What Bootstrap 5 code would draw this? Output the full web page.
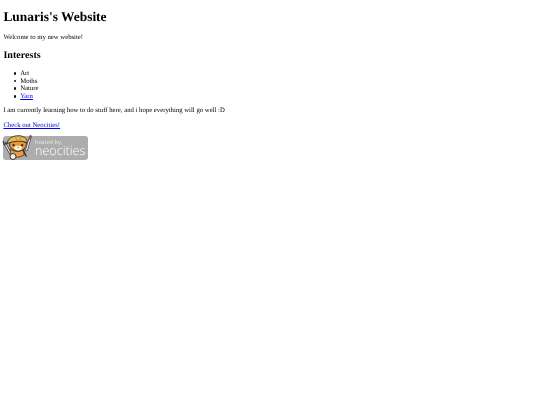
<!DOCTYPE html>
<html lang="en">
<head>
<meta charset="utf-8">
<title>Lunaris's Website</title>
<link href="https://cdn.jsdelivr.net/npm/bootstrap@5.3.0/dist/css/bootstrap.min.css" rel="stylesheet">
<style>
html, body { background: #fff; }
body { font-family: "Liberation Serif", serif; font-size: 6.72px; line-height: 7.56px; color: #000; padding: 9px 3.4px 0; text-rendering: geometricPrecision; }
.page-soft { filter: blur(.18px); }
.site-title { font-family: inherit; font-size: 13.44px; font-weight: 700; line-height: 15.54px; margin: 0 0 9.6px; }
.site-sub { font-family: inherit; font-size: 10.08px; font-weight: 700; line-height: 11.76px; margin: 0 0 8.4px; }
.site-text { margin: 0 0 6.72px; }
.site-text-wide { margin-bottom: 8.4px; }
.site-list { list-style: none; margin: 0 0 6.72px; padding-left: 16.8px; }
.site-list li::before { content: ""; display: inline-block; width: 2.8px; height: 2.8px; border-radius: 50%; background: #111; margin-left: -6.5px; margin-right: 3.7px; vertical-align: .06em; }
.site-list a, .site-text a { color: #0000ee; text-decoration: underline; }
.host-badge { position: relative; display: flex; align-items: center; width: 84.6px; height: 24.2px; margin-top: .4px; border-radius: 3px; background: #adadad; color: #fff; font-family: "Open Sans", sans-serif; }
.host-mascot { position: absolute; left: -1.4px; top: -1.6px; width: 32px; height: 28px; }
.host-words { display: flex; flex-direction: column; margin-left: 31.6px; }
.host-by { font-size: 5.6px; line-height: 6.4px; color: #e8e8e8; }
.host-name { font-size: 12.6px; line-height: 11.5px; font-weight: 300; }
</style>
</head>
<body>
<div class="page-soft">
<h1 class="site-title">Lunaris's Website</h1>
<p class="site-text site-text-wide">Welcome to my new website!</p>
<h2 class="site-sub">Interests</h2>
<ul class="site-list">
<li>Art</li>
<li>Moths</li>
<li>Nature</li>
<li><a href="#">Yarn</a></li>
</ul>
<p class="site-text">I am currently learning how to do stuff here, and i hope everything will go well :D</p>
<p class="site-text"><a href="#">Check out Neocities!</a></p>
<div class="host-badge">
<svg class="host-mascot" viewBox="2 134 32 28" aria-hidden="true">
<path d="M30.5 136.5 L26.5 150" stroke="#333" stroke-width="2.4" stroke-linecap="round"/>
<path d="M30.5 136.5 L26.5 150" stroke="#f2efe6" stroke-width="1.2" stroke-linecap="round"/>
<path d="M30.6 136.2 L29.6 139.6" stroke="#a83a3a" stroke-width="1.5"/>
<path d="M4.5 143 L12 156" stroke="#333" stroke-width="2.6" stroke-linecap="round"/>
<path d="M4.5 143 L12 156" stroke="#eee" stroke-width="1.3" stroke-linecap="round"/>
<path d="M3 141 L4.2 144.6 L7.2 143" fill="none" stroke="#333" stroke-width="1.2"/>
<path d="M10 149 Q18 154 24 149 L24 155 Q18 159 11 156Z" fill="#ef9a3d" stroke="#333" stroke-width=".8"/>
<circle cx="13" cy="156.5" r="3" fill="#f5f0e4" stroke="#333" stroke-width="1"/>
<path d="M23 150 L26 156" stroke="#333" stroke-width="1.6" stroke-linecap="round"/>
<path d="M9.5 143 Q9 150 18 151 Q26 151 26.5 143 Q18 138 9.5 143Z" fill="#ef953a" stroke="#333" stroke-width=".9"/>
<path d="M14 147 Q18 144.5 22 147 Q22 150.4 18 150.6 Q14 150.4 14 147Z" fill="#fbf3e2"/>
<circle cx="13.6" cy="145.2" r="1.1" fill="#222"/><circle cx="22.2" cy="145.2" r="1.1" fill="#222"/>
<path d="M17 147.2 L19 147.2 L18 148.3Z" fill="#6b3a22"/>
<path d="M7 143.5 Q8 137.5 15 136 Q21 134.6 25 137.6 Q27.5 139.6 27.5 142.6 Q18 139.4 7 143.5Z" fill="#e3bb4a" stroke="#333" stroke-width=".9"/>
<path d="M15 136.2 Q16.5 139 17 140.6 M19.6 135.6 Q20.6 138 20.8 140.6" fill="none" stroke="#a37f24" stroke-width=".7"/>
</svg>
<div class="host-words"><span class="host-by">hosted by,</span><span class="host-name">neocities</span></div>
</div>
</div>
</body>
</html>
